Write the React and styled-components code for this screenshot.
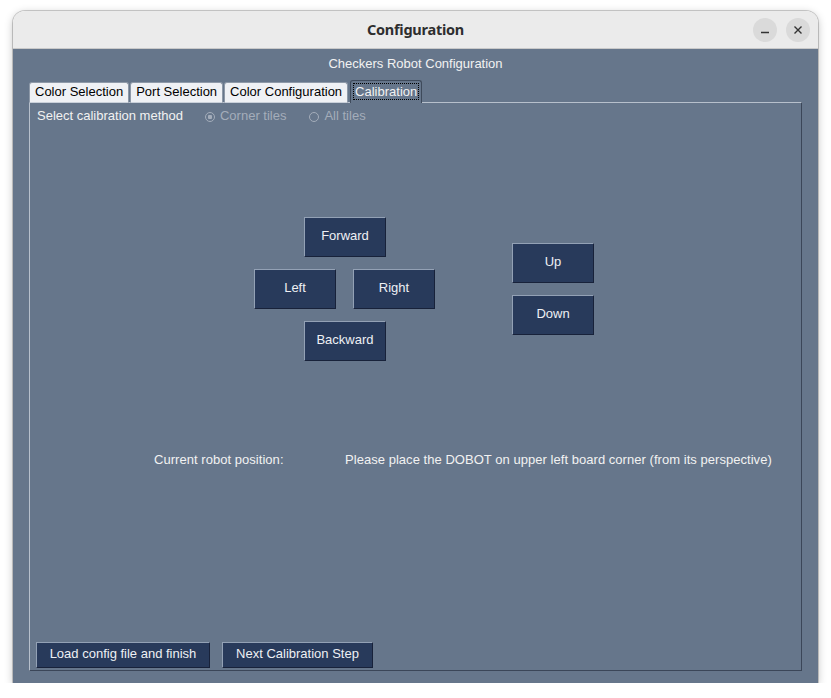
import React, { useState } from 'react';
import styled, { createGlobalStyle } from 'styled-components';

/** ********************************************* */
// Calibration window of the checkers robot config
/** ********************************************* */
const GlobalStyle = createGlobalStyle`
  html, body {
    margin: 0;
    padding: 0;
    background: #ffffff;
  }
  body {
    font-family: "Liberation Sans", Arial, sans-serif;
    font-size: 13px;
  }
`;

const TABS = ['Color Selection', 'Port Selection', 'Color Configuration', 'Calibration'];

export default function App() {
  const [tab, setTab] = useState('Calibration');
  const [method, setMethod] = useState('corner');

  return (
    <>
      <GlobalStyle />
      <Window>
        <TitleBar>
          <Title>Configuration</Title>
          <Controls>
            <RoundButton aria-label="minimize">
              <svg width="10" height="10" viewBox="0 0 10 10">
                <line x1="1" y1="7.5" x2="9" y2="7.5" stroke="#333" strokeWidth="1.3" />
              </svg>
            </RoundButton>
            <RoundButton aria-label="close">
              <svg width="10" height="10" viewBox="0 0 10 10">
                <path d="M1.5 1.5 L8.5 8.5 M8.5 1.5 L1.5 8.5" stroke="#333" strokeWidth="1.4" />
              </svg>
            </RoundButton>
          </Controls>
        </TitleBar>

        <Body>
          <Subtitle>Checkers Robot Configuration</Subtitle>
          <TabRow>
            {TABS.map((t) => (
              <Tab key={t} $active={t === tab} onClick={() => setTab(t)}>
                {t === tab ? <Focus>{t}</Focus> : t}
              </Tab>
            ))}
          </TabRow>

          <Panel>
            <MethodRow>
              <span>Select calibration method</span>
              <Radio $gap={22} onClick={() => setMethod('corner')}>
                <Dot $checked={method === 'corner'} />
                Corner tiles
              </Radio>
              <Radio $gap={23} onClick={() => setMethod('all')}>
                <Dot $checked={method === 'all'} />
                All tiles
              </Radio>
            </MethodRow>

            <Pad>
              <MoveButton $col="2 / 4" $row="1 / 3">Forward</MoveButton>
              <MoveButton $col="4" $row="2 / 4">Up</MoveButton>
              <MoveButton $col="1 / 3" $row="3 / 5">Left</MoveButton>
              <MoveButton $col="3" $row="3 / 5">Right</MoveButton>
              <MoveButton $col="4" $row="4 / 6">Down</MoveButton>
              <MoveButton $col="2 / 4" $row="5 / 7">Backward</MoveButton>
            </Pad>

            <PositionRow>
              <span>Current robot position:</span>
              <span>Please place the DOBOT on upper left board corner (from its perspective)</span>
            </PositionRow>

            <Spacer />

            <ButtonBar>
              <ActionButton $w={174}>Load config file and finish</ActionButton>
              <ActionButton $w={151}>Next Calibration Step</ActionButton>
            </ButtonBar>
          </Panel>
        </Body>
      </Window>
    </>
  );
}


// Styling
const Window = styled.div`
  width: 805px;
  height: 672px;
  margin: 11px 0 0 13px;
  display: flex;
  flex-direction: column;
  border-radius: 12px 12px 0 0;
  overflow: hidden;
  box-shadow: 0 0 0 1px rgba(0, 0, 0, 0.18), 0 2px 8px rgba(0, 0, 0, 0.25);
`;

const TitleBar = styled.div`
  height: 37px;
  flex: none;
  position: relative;
  display: flex;
  align-items: center;
  justify-content: center;
  background: #ebebeb;
  border-bottom: 1px solid #c9c9c9;
`;

const Title = styled.div`
  font-family: "Noto Sans", "DejaVu Sans", sans-serif;
  font-weight: 700;
  font-size: 14.5px;
  color: #2e2e2e;
  letter-spacing: -0.25px;
  margin-top: -2px;
`;

const Controls = styled.div`
  position: absolute;
  right: 8px;
  top: 7px;
  display: flex;
  gap: 9px;
`;

const RoundButton = styled.div`
  width: 24px;
  height: 24px;
  border-radius: 50%;
  background: #dadada;
  display: flex;
  align-items: center;
  justify-content: center;
`;

const Body = styled.div`
  flex: 1;
  display: flex;
  flex-direction: column;
  background: #66768b;
  padding: 0 16px 12px 16px;
  color: #f2f2f2;
`;

const Subtitle = styled.div`
  height: 31px;
  line-height: 30px;
  text-align: center;
`;

const TabRow = styled.div`
  height: 23px;
  display: flex;
  align-items: flex-end;
  gap: 1px;
  position: relative;
  z-index: 1;
  margin-bottom: -1px;
`;

const Tab = styled.div`
  height: ${(p) => (p.$active ? 23 : 21)}px;
  box-sizing: border-box;
  padding: 0 ${(p) => (p.$active ? 3 : 5)}px ${(p) => (p.$active ? 1 : 2)}px;
  margin-left: ${(p) => (p.$active ? 1 : 0)}px;
  display: flex;
  align-items: center;
  border: 1px solid ${(p) => (p.$active ? '#3e4a5b' : '#8e99a8')};
  border-bottom: ${(p) => (p.$active ? 'none' : '1px solid #c9d0da')};
  border-radius: 3px 3px 0 0;
  background: ${(p) => (p.$active ? '#66768b' : '#eff1f5')};
  color: ${(p) => (p.$active ? '#f2f2f2' : '#000000')};
  cursor: pointer;
`;

const Focus = styled.span`
  outline: 1px dotted #000000;
  outline-offset: 0px;
  line-height: 15px;
  padding: 0 1px;
`;

const Panel = styled.div`
  flex: 1;
  display: flex;
  flex-direction: column;
  border-top: 1px solid #b7c0cc;
  border-left: 1px solid #b7c0cc;
  border-right: 1px solid #3b4658;
  border-bottom: 1px solid #3b4658;
`;

const MethodRow = styled.div`
  margin-top: 4px;
  height: 17px;
  padding-left: 7px;
  display: flex;
  align-items: center;
`;

const Radio = styled.div`
  display: flex;
  align-items: center;
  margin-left: ${(p) => p.$gap}px;
  color: #a4adba;
  cursor: pointer;
`;

const Dot = styled.span`
  width: 8px;
  height: 8px;
  margin: 3px 5px 0 0;
  border-radius: 50%;
  border: 1px solid #a4adba;
  background: ${(p) => (p.$checked ? 'radial-gradient(circle, #a4adba 0 2px, transparent 2.5px)' : 'transparent')};
`;

const Pad = styled.div`
  margin: 93px 0 0 224px;
  display: grid;
  grid-template-columns: 50px 49px 159px 82px;
  grid-template-rows: repeat(6, 26px);
`;

const RaisedButton = styled.div`
  box-sizing: border-box;
  display: flex;
  align-items: center;
  justify-content: center;
  padding-bottom: 3px;
  background: #283a5b;
  color: #eef0f4;
  border-top: 1px solid #93a1b5;
  border-left: 1px solid #93a1b5;
  border-right: 1px solid #18223a;
  border-bottom: 1px solid #18223a;
  cursor: pointer;
  white-space: nowrap;
`;

const MoveButton = styled(RaisedButton)`
  grid-column: ${(p) => p.$col};
  grid-row: ${(p) => p.$row};
  width: 82px;
  height: 40px;
  justify-self: start;
  align-self: start;
`;

const PositionRow = styled.div`
  margin: 78px 0 0 124px;
  height: 16px;
  display: grid;
  grid-template-columns: 191px auto;
  align-items: center;
  letter-spacing: 0.04px;
`;

const Spacer = styled.div`
  flex: 1;
`;

const ButtonBar = styled.div`
  display: flex;
  gap: 12px;
  padding: 0 0 2px 6px;
`;

const ActionButton = styled(RaisedButton)`
  width: ${(p) => p.$w}px;
  height: 26px;
`;
